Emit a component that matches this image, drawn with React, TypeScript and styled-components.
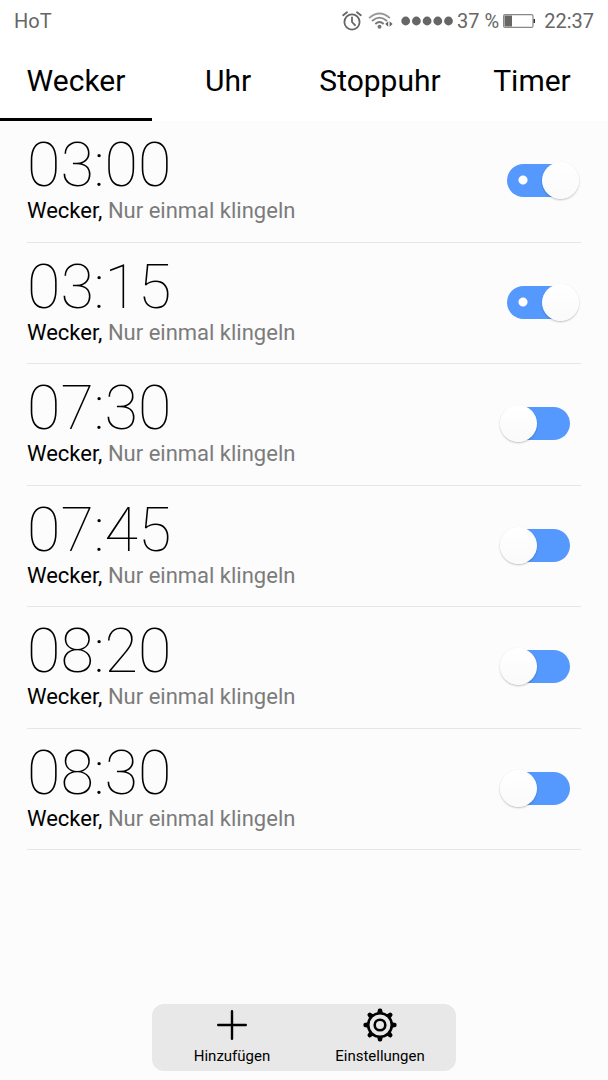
import React, { useState } from "react";
import styled, { createGlobalStyle } from "styled-components";

const GlobalStyle = createGlobalStyle`
  *, *::before, *::after { box-sizing: border-box; }
  body { margin: 0; background: #fcfcfc; font-family: Roboto, sans-serif; color: #000; }
  button { font: inherit; color: inherit; background: none; border: 0; padding: 0; cursor: pointer; }
`;

const Page = styled.div`
  display: flex;
  flex-direction: column;
  min-height: 100vh;
`;

const Header = styled.header`
  background: #fff;
`;

const StatusBar = styled.div`
  display: flex;
  align-items: center;
  justify-content: space-between;
  height: 42px;
  padding: 0 14px;
  font-size: 20px;
  line-height: 24px;
  color: #666;
`;

const StatusGroup = styled.div`
  display: flex;
  align-items: center;
  gap: 4px;
`;

const Clock = styled.span`
  margin-left: 4px;
`;

const Tabs = styled.nav`
  display: grid;
  grid-template-columns: repeat(4, 1fr);
`;

const Tab = styled.button<{ $active: boolean }>`
  height: 79px;
  padding-top: 2px;
  border-bottom: 3px solid ${(p) => (p.$active ? "#000" : "transparent")};
  font-size: 30px;
  line-height: 36px;
`;

const AlarmList = styled.ul`
  display: grid;
  grid-auto-rows: 1fr;
  min-height: 729px;
  margin: 0;
  padding: 0 27px;
  list-style: none;
`;

const AlarmRow = styled.li`
  display: flex;
  align-items: center;
  justify-content: space-between;
  border-bottom: 1px solid #e6e6e6;
`;

const AlarmLabel = styled.label`
  flex: 1;
  padding-bottom: 4px;
`;

const Time = styled.div`
  font-size: 61px;
  font-weight: 100;
  line-height: 64px;
`;

const Description = styled.div`
  font-size: 22px;
  line-height: 28px;
  color: #7b7b7b;
`;

const Name = styled.span`
  color: #000;
`;

const Switch = styled.input`
  appearance: none;
  position: relative;
  width: 80px;
  height: 38px;
  margin: 0 2px 0 0;
  cursor: pointer;

  &::before {
    content: "";
    position: absolute;
    top: 2px;
    left: 10px;
    width: 61px;
    height: 33px;
    border-radius: 17px;
    background: #5599fe;
  }

  &::after {
    content: "";
    position: absolute;
    top: 0;
    left: 1px;
    width: 37px;
    height: 37px;
    border-radius: 50%;
    background: linear-gradient(#fff, #fafafa);
    box-shadow: 0 1px 2px rgba(0, 0, 0, 0.25);
  }

  &:checked::before {
    left: 8px;
    background: radial-gradient(circle at 16px 16px, #fff 4px, #5599fe 5px);
  }

  &:checked::after {
    left: 43px;
  }
`;

const Footer = styled.footer`
  display: flex;
  justify-content: center;
  margin-top: auto;
  padding: 16px 0 9px;
`;

const ActionBar = styled.div`
  display: grid;
  grid-template-columns: 1fr 1fr;
  width: 50%;
  height: 67px;
  padding: 0 2px 0 6px;
  border-radius: 12px;
  background: #e8e8e8;
`;

const Action = styled.button`
  display: flex;
  flex-direction: column;
  align-items: center;
  padding-top: 4px;
  gap: 4px;
  font-size: 15px;
  line-height: 20px;
`;

const AlarmIcon = () => (
  <svg width="20" height="20" viewBox="0 0 20 20" fill="none" stroke="#666" strokeWidth="1.8" strokeLinecap="round" aria-hidden="true">
    <circle cx="10" cy="11" r="7.6" />
    <path d="M10 6.5V11l3 3.2M1.2 4.2 5 1.2M18.8 4.2 15 1.2" />
  </svg>
);

const WifiIcon = () => (
  <svg width="28" height="18" viewBox="-2 0 28 18" fill="none" strokeWidth="1.8" aria-hidden="true">
    <path d="M1 6.2Q11.5-3.2 22 6.2" stroke="#999" />
    <path d="M4 9Q11.5 2.3 19 9" stroke="#888" />
    <path d="M7.3 12Q11.5 8 15.7 12" stroke="#777" />
    <circle cx="11.5" cy="14.8" r="2" fill="#777" />
    <path d="M20.2 9.3v5.4L17.2 12zM21.6 9.3v5.4l3-2.7z" fill="#666" />
  </svg>
);

const SignalIcon = () => (
  <svg width="55" height="10" viewBox="-3 0 55 10" fill="#666" aria-hidden="true">
    {[4.7, 15.4, 26.1, 36.8, 47.5].map((x) => (
      <circle key={x} cx={x} cy="5" r="4.4" />
    ))}
  </svg>
);

const BatteryIcon = () => (
  <svg width="33" height="14" viewBox="0 0 33 14" aria-hidden="true">
    <rect x="0.6" y="0.6" width="29.4" height="12.8" rx="1.5" fill="none" stroke="#888" strokeWidth="1.2" />
    <path d="M1.5 1.5H9v11H1.5z" fill="#666" />
    <path d="M30.5 5H32v4h-1.5z" fill="#333" />
  </svg>
);

const PlusIcon = () => (
  <svg width="34" height="34" viewBox="0 0 34 34" stroke="#000" strokeWidth="2.4" strokeLinecap="round" aria-hidden="true">
    <path d="M17 3.2v27.6M3.2 17h27.6" />
  </svg>
);

const GearIcon = () => (
  <svg width="34" height="34" viewBox="0 0 34 34" fill="none" stroke="#000" aria-hidden="true">
    <circle cx="17" cy="17" r="11.8" strokeWidth="2.6" />
    <circle cx="17" cy="17" r="5.3" strokeWidth="2.6" />
    {[0, 45, 90, 135, 180, 225, 270, 315].map((a) => (
      <path
        key={a}
        d="M14.2 4.8 15 1.5Q15.2.4 17 .4t2 1.1l.8 3.3z"
        fill="#000"
        stroke="none"
        transform={`rotate(${a} 17 17)`}
      />
    ))}
  </svg>
);

const tabs = ["Wecker", "Uhr", "Stoppuhr", "Timer"];

const initialAlarms = [
  { time: "03:00", on: true },
  { time: "03:15", on: true },
  { time: "07:30", on: false },
  { time: "07:45", on: false },
  { time: "08:20", on: false },
  { time: "08:30", on: false },
];

export default function App() {
  const [active, setActive] = useState("Wecker");
  const [alarms, setAlarms] = useState(initialAlarms);

  const toggle = (time: string) =>
    setAlarms((list) => list.map((a) => (a.time === time ? { ...a, on: !a.on } : a)));

  return (
    <Page>
      <GlobalStyle />
      <Header>
        <StatusBar>
          <span>HoT</span>
          <StatusGroup>
            <AlarmIcon />
            <WifiIcon />
            <SignalIcon />
            <span>37 %</span>
            <BatteryIcon />
            <Clock>22:37</Clock>
          </StatusGroup>
        </StatusBar>
        <Tabs>
          {tabs.map((tab) => (
            <Tab key={tab} type="button" $active={tab === active} onClick={() => setActive(tab)}>
              {tab}
            </Tab>
          ))}
        </Tabs>
      </Header>
      <main>
        <AlarmList>
          {alarms.map(({ time, on }) => (
            <AlarmRow key={time}>
              <AlarmLabel htmlFor={`alarm-${time}`}>
                <Time>{time}</Time>
                <Description>
                  <Name>Wecker,</Name> Nur einmal klingeln
                </Description>
              </AlarmLabel>
              <Switch id={`alarm-${time}`} type="checkbox" checked={on} onChange={() => toggle(time)} />
            </AlarmRow>
          ))}
        </AlarmList>
      </main>
      <Footer>
        <ActionBar>
          <Action type="button">
            <PlusIcon />
            Hinzufügen
          </Action>
          <Action type="button">
            <GearIcon />
            Einstellungen
          </Action>
        </ActionBar>
      </Footer>
    </Page>
  );
}
